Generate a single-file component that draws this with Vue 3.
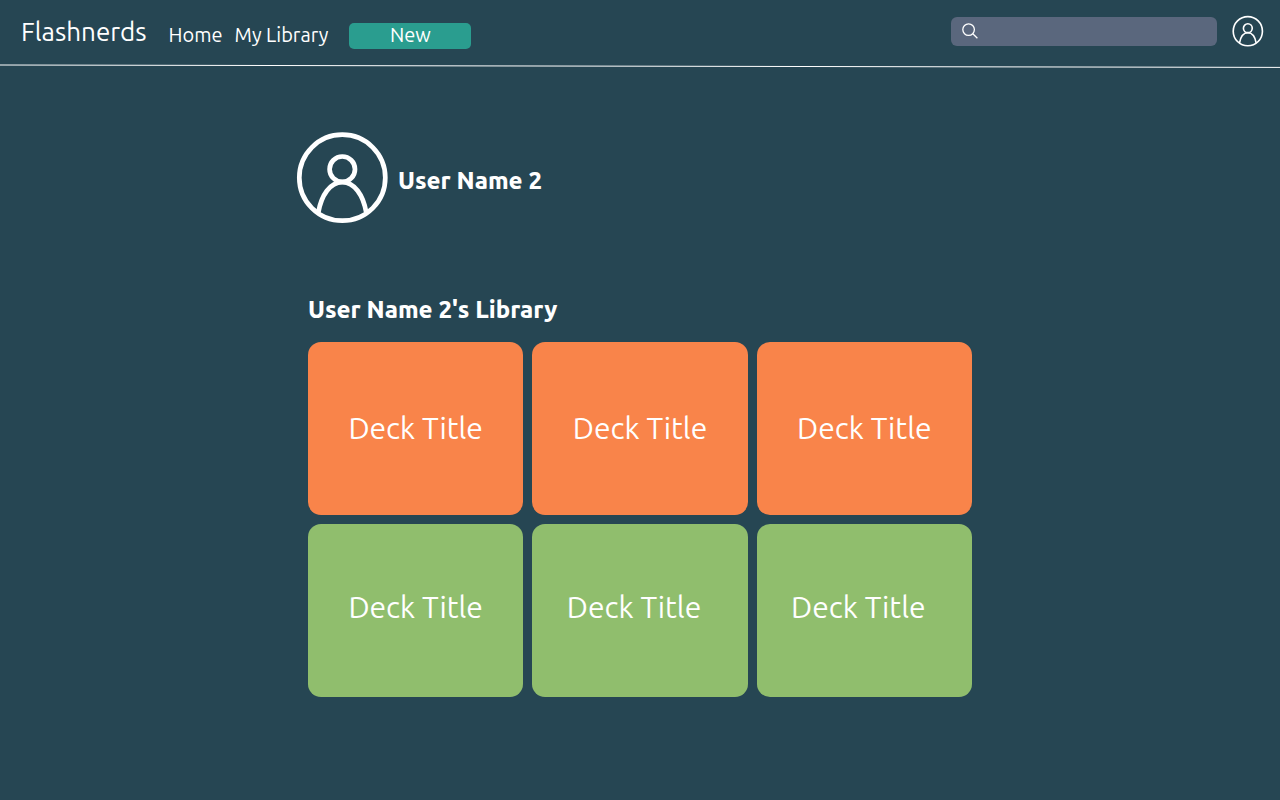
<script setup>
import { ref } from 'vue'

const query = ref('')
const userName = 'User Name 2'
const decks = [
  { id: 1, title: 'Deck Title', tone: 'orange' },
  { id: 2, title: 'Deck Title', tone: 'orange' },
  { id: 3, title: 'Deck Title', tone: 'orange' },
  { id: 4, title: 'Deck Title', tone: 'green' },
  { id: 5, title: 'Deck Title', tone: 'green', wideEnd: true },
  { id: 6, title: 'Deck Title', tone: 'green', wideEnd: true },
]
</script>

<template>
  <div class="page">
    <header class="header">
      <div class="bar">
        <a class="brand" href="#">Flashnerds</a>
        <nav class="nav">
          <a href="#">Home</a>
          <a href="#">My Library</a>
        </nav>
        <button class="new" type="button">New</button>
        <label class="search">
          <svg class="lens" viewBox="0 0 16 16" aria-hidden="true">
            <circle cx="6.6" cy="6.6" r="5.8" />
            <path d="M10.8 10.8 15.4 15.2" />
          </svg>
          <input v-model="query" type="search" aria-label="Search" />
        </label>
        <a class="account" href="#" aria-label="Account">
          <svg class="avatar small" viewBox="0 0 92 92" aria-hidden="true">
            <circle cx="45.5" cy="46.5" r="42" />
            <circle cx="45.5" cy="38" r="12.7" />
            <path d="M21.5 81C24.5 63 33.5 51 45.5 51S66.5 63 69.5 81" />
          </svg>
        </a>
      </div>
      <svg class="rule" viewBox="0 0 1280 4" preserveAspectRatio="none" aria-hidden="true">
        <path d="M0 1 1280 3.4" />
      </svg>
    </header>

    <main class="content">
      <section class="profile">
        <svg class="avatar large" viewBox="0 0 92 92" aria-hidden="true">
          <circle cx="46.3" cy="45.7" r="43" />
          <circle cx="46.3" cy="37.2" r="12.7" />
          <path d="M22.3 80.7C25.3 63 34.3 50.1 46.3 50.1S67.3 63 70.3 80.7" />
        </svg>
        <h1>{{ userName }}</h1>
      </section>

      <section>
        <h2>{{ userName }}'s Library</h2>
        <div class="decks">
          <a
            v-for="deck in decks"
            :key="deck.id"
            class="deck"
            :class="[deck.tone, { 'wide-end': deck.wideEnd }]"
            href="#"
          >{{ deck.title }}</a>
        </div>
      </section>
    </main>
  </div>
</template>

<style>
body {
  margin: 0;
  background: #264653;
}
</style>

<style scoped>
.page {
  min-height: 100vh;
  box-sizing: border-box;
  background: #264653;
  color: #fff;
  font-family: Ubuntu, "Noto Sans", sans-serif;
}

a {
  color: inherit;
  text-decoration: none;
}

.bar {
  display: flex;
  align-items: center;
  height: 64px;
  padding: 0 16px 0 21px;
  box-sizing: border-box;
}

.brand {
  font-size: 26px;
  line-height: 32px;
  white-space: nowrap;
}

.nav {
  display: flex;
  gap: 12px;
  margin-left: 22px;
  padding-top: 6px;
  font-size: 20px;
  line-height: 26px;
  white-space: nowrap;
}

.new {
  width: 122px;
  height: 26px;
  margin: 8px 0 0 21px;
  padding: 0 0 2px;
  border: 0;
  border-radius: 5px;
  background: #2a9d8f;
  color: #fff;
  font: inherit;
  font-size: 20px;
  line-height: 24px;
}

.search {
  display: flex;
  align-items: center;
  gap: 8px;
  width: 266px;
  height: 29px;
  margin: 0 15px 2px auto;
  padding: 0 11px;
  box-sizing: border-box;
  border-radius: 6px;
  background: #5a677d;
}

.lens {
  flex: none;
  width: 16px;
  height: 16px;
  fill: none;
  stroke: #fff;
  stroke-width: 1.3;
}

.search input {
  flex: 1;
  min-width: 0;
  padding: 0;
  border: 0;
  outline: 0;
  background: transparent;
  color: #fff;
  font: inherit;
  font-size: 16px;
}

.account {
  display: flex;
  margin-bottom: 2px;
}

.avatar {
  display: block;
  flex: none;
  fill: none;
  stroke: #fff;
  stroke-width: 4.7;
}

.small {
  width: 32px;
  height: 32px;
}

.large {
  width: 92px;
  height: 92px;
}

.rule {
  display: block;
  width: 100%;
  height: 4px;
  fill: none;
  stroke: #fff;
  stroke-width: 1;
}

.content {
  max-width: 664px;
  margin: 0 auto;
  padding: 64px 16px 48px;
}

.profile {
  display: flex;
  align-items: center;
  gap: 10px;
  margin-left: -12px;
}

h1,
h2 {
  margin: 0;
  font-size: 24px;
  line-height: 32px;
  font-weight: 800;
}

h1 {
  padding-top: 6px;
}

h2 {
  margin: 70px 0 16px;
}

.decks {
  display: grid;
  grid-template-columns: repeat(3, 1fr);
  gap: 9px;
}

.deck {
  display: flex;
  align-items: center;
  justify-content: center;
  min-height: 173px;
  padding-bottom: 2px;
  box-sizing: border-box;
  border-radius: 13px;
  font-size: 30px;
  line-height: 36px;
}

.orange {
  background: #f9844a;
}

.green {
  padding-bottom: 8px;
  background: #90be6d;
}

.wide-end {
  padding-right: 12px;
}
</style>
